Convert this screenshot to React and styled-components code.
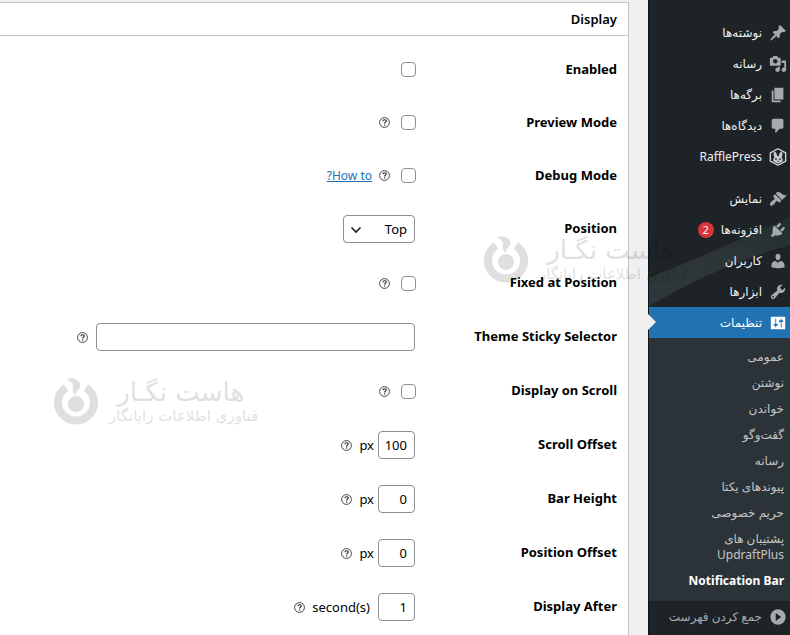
import React from 'react';
import styled, { createGlobalStyle, css } from 'styled-components';

const GlobalStyle = createGlobalStyle`
  *, *::before, *::after { box-sizing: border-box; }
  body {
    margin: 0;
    background: #f0f0f1;
    color: #000;
    font-family: "Noto Sans", "DejaVu Sans", sans-serif;
    font-size: 13px;
    line-height: 16px;
  }
  ul { margin: 0; padding: 0; list-style: none; }
`;

const Page = styled.div`
  position: relative;
  display: flex;
  align-items: stretch;
  gap: 19px;
  min-height: 100vh;
  overflow: hidden;
`;

const Sidebar = styled.nav`
  position: relative;
  flex: 0 0 142px;
  padding-top: 17px;
  background: #1d2327;
  border-left: 1px solid #101517;
`;

const Sheen = styled.svg`
  position: absolute;
  left: 0;
  top: 205px;
  width: 100%;
  height: 102px;
`;

const MenuItem = styled.li`
  position: relative;
  margin-top: ${(p) => (p.$spaced ? '11px' : '0')};
`;

const MenuLink = styled.a`
  position: relative;
  display: flex;
  align-items: center;
  gap: 7px;
  height: 31px;
  padding-right: 3px;
  color: #f0f0f1;
  font-size: 12px;
  text-decoration: none;
  white-space: nowrap;
  ${(p) =>
    p.$active &&
    css`
      background: #2271b1;
      color: #fff;
      &::after {
        content: '';
        position: absolute;
        left: -1px;
        top: 7px;
        border: 8px solid transparent;
        border-left-color: #f0f0f1;
        border-right-width: 0;
      }
    `}
`;

const MenuIcon = styled.svg`
  flex: none;
  width: 18px;
  height: 18px;
  fill: ${(p) => (p.$active ? '#fff' : '#a7aaad')};
`;

const Badge = styled.span`
  display: grid;
  place-items: center;
  width: 16px;
  height: 16px;
  border-radius: 8px;
  background: #d63638;
  color: #fff;
  font-size: 11px;
`;

const SubMenu = styled.ul`
  padding: 6px 0 7px;
  background: #2c3338;
`;

const SubLink = styled.a`
  display: block;
  padding: 5px 6px;
  color: ${(p) => (p.$current ? '#fff' : '#c3c4c7')};
  font-size: 12px;
  font-weight: ${(p) => (p.$current ? 700 : 400)};
  text-decoration: none;
`;

const CollapseButton = styled.button`
  display: flex;
  align-items: center;
  gap: 7px;
  width: 100%;
  height: 31px;
  padding: 0 3px 0 0;
  border: 0;
  background: none;
  color: #a7aaad;
  font: inherit;
  font-size: 12px;
  white-space: nowrap;
`;

const Content = styled.main`
  flex: 1;
  min-width: 0;
  padding-top: 2px;
`;

const Panel = styled.section`
  min-height: 100%;
  border: 1px solid #c3c4c7;
  border-width: 1px 1px 0 0;
  background: #fff;
`;

const PanelTitle = styled.h2`
  margin: 0;
  padding: 8px 11px;
  border-bottom: 1px solid #c3c4c7;
  font-size: 13px;
  font-weight: 600;
  line-height: 16px;
`;

const Settings = styled.div`
  padding-top: 7px;
`;

const Row = styled.div`
  display: grid;
  grid-template-columns: 202px 1fr;
  align-items: center;
  height: ${(p) => (p.$compact ? '53px' : '54px')};
  padding-right: 11px;
`;

const RowLabel = styled.label`
  font-weight: 700;
  line-height: 18px;
  padding-bottom: 2px;
`;

const Field = styled.div`
  display: flex;
  align-items: center;
  gap: 7px;
`;

const control = css`
  border: 1px solid #8c8f94;
  border-radius: 4px;
  background: #fff;
  color: #000;
  font: inherit;
`;

const Checkbox = styled.input`
  ${control}
  appearance: none;
  width: 15px;
  height: 15px;
  margin: 0 -1px 0 4px;
`;

const TextInput = styled.input`
  ${control}
  width: 319px;
  height: 28px;
  margin-left: 1px;
  padding: 0 7px;
`;

const NumberInput = styled.input`
  ${control}
  width: 37px;
  height: 28px;
  padding: 0 7px 0 0;
  text-align: right;
`;

const SelectWrap = styled.span`
  position: relative;
`;

const Select = styled.select`
  ${control}
  display: block;
  appearance: none;
  width: 72px;
  height: 28px;
  padding: 0 7px;
`;

const Chevron = styled.svg`
  position: absolute;
  left: 7px;
  top: 9px;
  width: 12px;
  height: 12px;
  pointer-events: none;
`;

const Unit = styled.span`
  margin-right: ${(p) => (p.$wide ? '1px' : '-3px')};
`;

const HelpButton = styled.button`
  display: block;
  width: 11px;
  height: 11px;
  padding: 0;
  border: 0;
  background: none;
  svg { display: block; width: 11px; height: 11px; }
`;

const HowTo = styled.a`
  color: #2271b1;
  font-size: 12px;
`;

const Watermark = styled.div`
  position: absolute;
  left: ${(p) => p.$x}px;
  top: ${(p) => p.$y}px;
  display: flex;
  align-items: center;
  gap: 10px;
  color: #000;
  opacity: 0.12;
  pointer-events: none;
  white-space: nowrap;
  svg { width: 46px; height: 50px; }
`;

const Brand = styled.div`
  padding-right: 14px;
  font-family: "DejaVu Sans", sans-serif;
  font-size: 26px;
  line-height: 28px;
`;

const Tagline = styled.div`
  font-family: "DejaVu Sans", sans-serif;
  font-size: 15px;
  line-height: 20px;
`;

const icons = {
  post: 'M10.44 3.02l1.82-1.82 6.36 6.35-1.83 1.82c-1.05-.68-2.48-.57-3.41.36l-.75.75c-.92.93-1.04 2.35-.35 3.41l-1.83 1.82-2.41-2.41-2.8 2.79c-.42.42-3.38 2.71-3.8 2.29s1.86-3.39 2.28-3.81l2.79-2.79L4.1 9.36l1.83-1.82c1.05.69 2.48.57 3.4-.36l.75-.75c.93-.92 1.05-2.35.36-3.41z',
  media: 'M13 11V4c0-.55-.45-1-1-1h-1.67L9 1H5L3.67 3H2c-.55 0-1 .45-1 1v7c0 .55.45 1 1 1h10c.55 0 1-.45 1-1zM7 4.5c1.38 0 2.5 1.12 2.5 2.5S8.38 9.5 7 9.5 4.5 8.38 4.5 7 5.62 4.5 7 4.5zM14 6h5v10.5c0 1.38-1.12 2.5-2.5 2.5S14 17.88 14 16.5s1.12-2.5 2.5-2.5c.17 0 .34.02.5.05V9h-3V6zm-4 8.05V13h2v3.5c0 1.38-1.12 2.5-2.5 2.5S7 17.88 7 16.5 8.12 14 9.5 14c.17 0 .34.02.5.05z',
  page: 'M6 15V2h10v13H6zm-1 1h8v2H3V5h2v11z',
  comments: 'M5 2h9c1.1 0 2 .9 2 2v7c0 1.1-.9 2-2 2h-2l-5 5v-5H5c-1.1 0-2-.9-2-2V4c0-1.1.9-2 2-2z',
  appearance: 'M14.48 11.06L7.41 3.99l1.5-1.5c.5-.56 2.3-.47 3.51.32 1.21.8 1.43 1.28 2.91 2.1 1.18.64 2.45 1.26 4.45.85zm-.71.71L6.7 4.7 4.93 6.47c-.39.39-.39 1.02 0 1.41l1.06 1.06c.39.39.39 1.03 0 1.42-.6.6-1.43 1.11-2.21 1.69-.35.26-.7.53-1.01.84C1.43 14.23.4 16.08 1.4 17.07c.99 1 2.84-.03 4.18-1.36.31-.31.58-.66.85-1.02.57-.78 1.08-1.61 1.69-2.21.39-.39 1.02-.39 1.41 0l1.06 1.06c.39.39 1.02.39 1.41 0z',
  plugins: 'M13.11 4.36L9.87 7.6 8 5.73l3.24-3.24c.35-.34 1.05-.2 1.56.32.52.51.66 1.21.31 1.55zm-8 1.77l.91-1.12 9.01 9.01-1.19.84c-.71.71-2.63 1.16-3.82 1.16H6.14L4.9 17.26c-.59.59-1.54.59-2.12 0-.59-.58-.59-1.53 0-2.12l1.24-1.24v-3.88c0-1.13.4-3.19 1.09-3.89zm7.26 3.97l3.24-3.24c.34-.35 1.04-.21 1.55.31.52.51.66 1.21.31 1.55l-3.24 3.25z',
  users: 'M10 9.25c-2.27 0-2.73-3.44-2.73-3.44C7 4.02 7.82 2 9.97 2c2.16 0 2.98 2.02 2.71 3.81 0 0-.41 3.44-2.68 3.44zm0 2.57L12.72 10c2.39 0 4.52 2.33 4.52 4.53v2.49s-3.65 1.13-7.24 1.13c-3.65 0-7.24-1.13-7.24-1.13v-2.49c0-2.25 1.94-4.48 4.47-4.48z',
  tools: 'M16.68 9.77c-1.34 1.34-3.3 1.67-4.95.99l-5.41 6.52c-.99.99-2.59.99-3.58 0s-.99-2.59 0-3.57l6.52-5.42c-.68-1.65-.35-3.61.99-4.95 1.28-1.28 3.12-1.62 4.72-1.06l-2.89 2.89 2.82 2.82 2.86-2.87c.53 1.58.18 3.39-1.08 4.65zM3.81 16.21c.4.39 1.04.39 1.43 0 .4-.4.4-1.04 0-1.43-.39-.4-1.03-.4-1.43 0-.39.39-.39 1.03 0 1.43z',
  settings: 'M18 16V4c0-.55-.45-1-1-1H3c-.55 0-1 .45-1 1v12c0 .55.45 1 1 1h14c.55 0 1-.45 1-1zM8 11h1c.55 0 1 .45 1 1s-.45 1-1 1H8v1.5c0 .28-.22.5-.5.5s-.5-.22-.5-.5V13H6c-.55 0-1-.45-1-1s.45-1 1-1h1V5.5c0-.28.22-.5.5-.5s.5.22.5.5V11zm5-2h-1c-.55 0-1-.45-1-1s.45-1 1-1h1V5.5c0-.28.22-.5.5-.5s.5.22.5.5V7h1c.55 0 1 .45 1 1s-.45 1-1 1h-1v5.5c0 .28-.22.5-.5.5s-.5-.22-.5-.5V9z',
};

const menu = [
  { label: 'نوشته‌ها', icon: 'post' },
  { label: 'رسانه', icon: 'media' },
  { label: 'برگه‌ها', icon: 'page' },
  { label: 'دیدگاه‌ها', icon: 'comments' },
  { label: 'RafflePress', icon: 'raffle' },
  { label: 'نمایش', icon: 'appearance', spaced: true },
  { label: 'افزونه‌ها', icon: 'plugins', badge: '2' },
  { label: 'کاربران', icon: 'users' },
  { label: 'ابزارها', icon: 'tools' },
  { label: 'تنظیمات', icon: 'settings', active: true },
];

const subMenu = [
  'عمومی',
  'نوشتن',
  'خواندن',
  'گفت‌وگو',
  'رسانه',
  'پیوندهای یکتا',
  'حریم خصوصی',
  'پشتیبان های UpdraftPlus',
  'Notification Bar',
];

const settings = [
  { id: 'enabled', label: 'Enabled', type: 'checkbox', compact: true },
  { id: 'preview', label: 'Preview Mode', type: 'checkbox', help: true, compact: true },
  { id: 'debug', label: 'Debug Mode', type: 'checkbox', help: true, link: 'How to?', compact: true },
  { id: 'position', label: 'Position', type: 'select' },
  { id: 'fixed', label: 'Fixed at Position', type: 'checkbox', help: true },
  { id: 'sticky', label: 'Theme Sticky Selector', type: 'text', help: true },
  { id: 'scroll', label: 'Display on Scroll', type: 'checkbox', help: true },
  { id: 'scroll-offset', label: 'Scroll Offset', type: 'number', value: '100', unit: 'px', help: true },
  { id: 'height', label: 'Bar Height', type: 'number', value: '0', unit: 'px', help: true },
  { id: 'offset', label: 'Position Offset', type: 'number', value: '0', unit: 'px', help: true },
  { id: 'after', label: 'Display After', type: 'number', value: '1', unit: 'second(s)', help: true },
];

function Icon({ name, active }) {
  if (name === 'raffle') {
    return (
      <MenuIcon viewBox="0 0 20 20" aria-hidden="true">
        <path d="M10 .8l8.500 4.600v9.200L10 19.200l-8.500-4.600V5.400z" fill="none" stroke="#d5d7d9" strokeWidth="1.500" strokeLinejoin="round" />
        <path
          d="M5.500 4.200C7.700 4.200 9 6.500 9 9h2c0-2.500 1.300-4.800 3.500-4.800.8 2 .5 4.300-.6 6 1.500 1.300 1.700 3.300 1 4.900L10 17.600l-4.900-2.500c-.7-1.600-.5-3.600 1-4.900-1.100-1.700-1.400-4-.6-6z"
          fill="#c9cbcd"
        />
        <circle cx="7.800" cy="12.300" r="1" fill="#1d2327" />
        <circle cx="12.200" cy="12.300" r="1" fill="#1d2327" />
        <path d="M9 14.200h2l-1 1.500z" fill="#1d2327" />
      </MenuIcon>
    );
  }
  return (
    <MenuIcon viewBox="0 0 20 20" $active={active} aria-hidden="true">
      <path d={icons[name]} />
    </MenuIcon>
  );
}

function Help({ label }) {
  return (
    <HelpButton type="button" aria-label={`Help: ${label}`}>
      <svg viewBox="0 0 11 11" fill="none" stroke="#2c3338">
        <circle cx="5.5" cy="5.5" r="4.9" strokeWidth="0.9" />
        <path d="M3.9 4.3c0-2.1 3.3-2 3.3-.2 0 1.200-1.600 1.200-1.600 2.400" strokeWidth="1.2" />
        <path d="M5.6 7.4v1.2" strokeWidth="1.3" />
      </svg>
    </HelpButton>
  );
}

function Control({ item }) {
  if (item.type === 'checkbox') return <Checkbox id={item.id} type="checkbox" />;
  if (item.type === 'text') return <TextInput id={item.id} type="text" />;
  if (item.type === 'number') {
    return <NumberInput id={item.id} type="text" inputMode="numeric" dir="ltr" defaultValue={item.value} />;
  }
  return (
    <SelectWrap>
      <Select id={item.id} defaultValue="top">
        <option value="top">Top</option>
      </Select>
      <Chevron viewBox="0 0 12 12" fill="none" stroke="#1d2327" strokeWidth="1.7" aria-hidden="true">
        <path d="M1.5 3.5L6 8l4.500-4.500" />
      </Chevron>
    </SelectWrap>
  );
}

function HostMark({ x, y }) {
  return (
    <Watermark $x={x} $y={y} aria-hidden="true">
      <div>
        <Brand>هاست نگـار</Brand>
        <Tagline>فناوری اطلاعات رایانگار</Tagline>
      </div>
      <svg viewBox="0 0 46 50">
        <path d="M13 10.5A18 18 0 1 0 33 10.5" fill="none" stroke="#000" strokeWidth="8" />
        <circle cx="23" cy="27" r="8" />
        <path d="M14 2c8-3 15 3 13 8-1 3-4 3-4 8-5-4-3-7-3-9 0-3-3-5-6-7z" />
      </svg>
    </Watermark>
  );
}

export default function App() {
  return (
    <Page dir="rtl" lang="fa">
      <GlobalStyle />
      <Sidebar aria-label="فهرست">
        <Sheen viewBox="0 0 142 102" preserveAspectRatio="none" aria-hidden="true">
          <defs>
            <linearGradient id="sheen" x1="0" y1="1" x2="1" y2="0">
              <stop offset="0" stopColor="#2f373a" />
              <stop offset="0.6" stopColor="#2c3437" />
              <stop offset="1" stopColor="#20302e" />
            </linearGradient>
          </defs>
          <path d="M0 73Q70 45 142 12V40Q70 60 0 101z" fill="url(#sheen)" />
        </Sheen>
        <ul>
          {menu.map((m) => (
            <MenuItem key={m.label} $spaced={m.spaced}>
              <MenuLink href="#" $active={m.active} aria-current={m.active ? 'true' : undefined}>
                <Icon name={m.icon} active={m.active} />
                {m.label}
                {m.badge && <Badge>{m.badge}</Badge>}
              </MenuLink>
              {m.active && (
                <SubMenu>
                  {subMenu.map((s, i) => (
                    <li key={s}>
                      <SubLink href="#" $current={i === subMenu.length - 1}>{s}</SubLink>
                    </li>
                  ))}
                </SubMenu>
              )}
            </MenuItem>
          ))}
        </ul>
        <CollapseButton type="button">
          <MenuIcon viewBox="0 0 20 20" aria-hidden="true">
            <circle cx="10" cy="10" r="8.5" />
            <path d="M7.5 5.5v9l6-4.500z" fill="#1d2327" />
          </MenuIcon>
          جمع کردن فهرست
        </CollapseButton>
      </Sidebar>
      <Content>
        <Panel>
          <PanelTitle>Display</PanelTitle>
          <Settings>
            {settings.map((item) => (
              <Row key={item.id} $compact={item.compact}>
                <RowLabel htmlFor={item.id}>{item.label}</RowLabel>
                <Field>
                  <Control item={item} />
                  {item.unit && <Unit $wide={item.unit.length > 2}>{item.unit}&lrm;</Unit>}
                  {item.help && <Help label={item.label} />}
                  {item.link && <HowTo href="#">{item.link}</HowTo>}
                </Field>
              </Row>
            ))}
          </Settings>
        </Panel>
      </Content>
      <HostMark x={483} y={235} />
      <HostMark x={53} y={377} />
    </Page>
  );
}
